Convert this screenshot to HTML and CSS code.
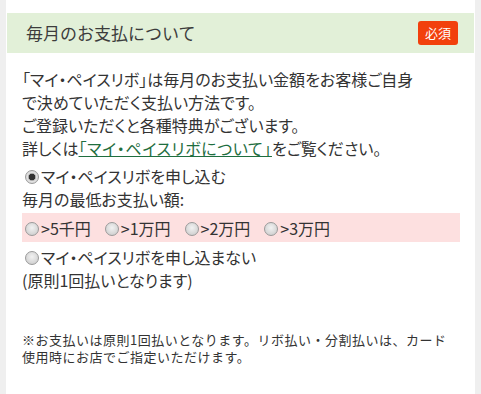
FILE: index.html
```html
<!DOCTYPE html>
<html lang="ja">
<head>
<meta charset="utf-8">
<title>毎月のお支払について</title>
<link rel="stylesheet" href="styles.css">
</head>
<body>
<div class="panel">
  <div class="head">
    <h2 class="head-title">毎月のお支払について</h2>
    <span class="badge">必須</span>
  </div>
  <div class="content">
    <p class="intro">「マイ・ペイスリボ」は毎月のお支払い金額をお客様ご自身<br>で決めていただく支払い方法です。<br>ご登録いただくと各種特典がございます。<br>詳しくは<a class="link" href="#">「マイ・ペイスリボについて」</a>をご覧ください。</p>
    <label class="row row-first"><input type="radio" name="ribo" class="radio" checked>マイ・ペイスリボを申し込む</label>
    <div class="row">毎月の最低お支払い額:</div>
    <div class="amounts">
      <label class="amount"><input type="radio" name="amt" class="radio">&gt;5千円</label>
      <label class="amount"><input type="radio" name="amt" class="radio">&gt;1万円</label>
      <label class="amount"><input type="radio" name="amt" class="radio">&gt;2万円</label>
      <label class="amount"><input type="radio" name="amt" class="radio">&gt;3万円</label>
    </div>
    <label class="row row-no"><input type="radio" name="ribo" class="radio">マイ・ペイスリボを申し込まない</label>
    <div class="row">(原則1回払いとなります)</div>
    <p class="note">※お支払いは原則1回払いとなります。リボ払い・分割払いは、カード<br>使用時にお店でご指定いただけます。</p>
  </div>
</div>
</body>
</html>
```

FILE: styles.css
```css
html, body {
  margin: 0;
  padding: 0;
}
body {
  background: #efefef;
  font-family: "Noto Sans CJK JP", "Noto Sans", sans-serif;
  color: #333;
  width: 481px;
  height: 394px;
  overflow: hidden;
}
.panel {
  margin-left: 6px;
  width: 469px;
  height: 394px;
  background: #fff;
  padding-top: 13px;
  box-sizing: border-box;
}
.head {
  margin: 0 1px;
  height: 40px;
  background: #e2f0d8;
  display: flex;
  align-items: center;
  justify-content: space-between;
  padding: 0 16px 0 19px;
}
.head-title {
  margin: 0;
  font-size: 17px;
  font-weight: normal;
  color: #3c3c3c;
  line-height: 24px;
}
.badge {
  display: inline-block;
  width: 40px;
  height: 24px;
  line-height: 24px;
  text-align: center;
  background: #f2400c;
  color: #fff;
  font-size: 13px;
  border-radius: 3px;
}
.content {
  padding: 15px 15px 0 16px;
  font-size: 16px;
  line-height: 23px;
  font-feature-settings: "palt";
}
.intro {
  margin: 0;
}
.link {
  color: #1f6e3f;
  text-decoration: underline;
  letter-spacing: 0.6px;
}
.row {
  display: flex;
  align-items: center;
  height: 23px;
}
.row-first {
  margin-top: 5px;
}
.row-no {
  margin-top: 4px;
}
.amounts {
  margin-top: 2px;
  background: #fde0e0;
  height: 29px;
  display: flex;
  align-items: center;
  gap: 11px;
  padding-top: 2px;
  box-sizing: border-box;
}
.amount {
  display: flex;
  align-items: center;
}
.radio {
  -webkit-appearance: none;
  appearance: none;
  width: 14px;
  height: 14px;
  margin: 0 2px 0 3px;
  border-radius: 50%;
  border: 1px solid #9a9a9a;
  background: radial-gradient(circle at 50% 40%, #f2f2f2 0%, #d2d2d2 75%, #c4c4c4 100%);
  box-sizing: border-box;
  flex: none;
}
.radio:checked {
  background: radial-gradient(circle, #333 0 3px, #a8a8a8 3.5px, #e2e2e2 4.5px, #cdcdcd 100%);
}
.note {
  margin: 39px 0 0;
  font-size: 13px;
  line-height: 17px;
  letter-spacing: 0.5px;
  font-feature-settings: normal;
}
```
